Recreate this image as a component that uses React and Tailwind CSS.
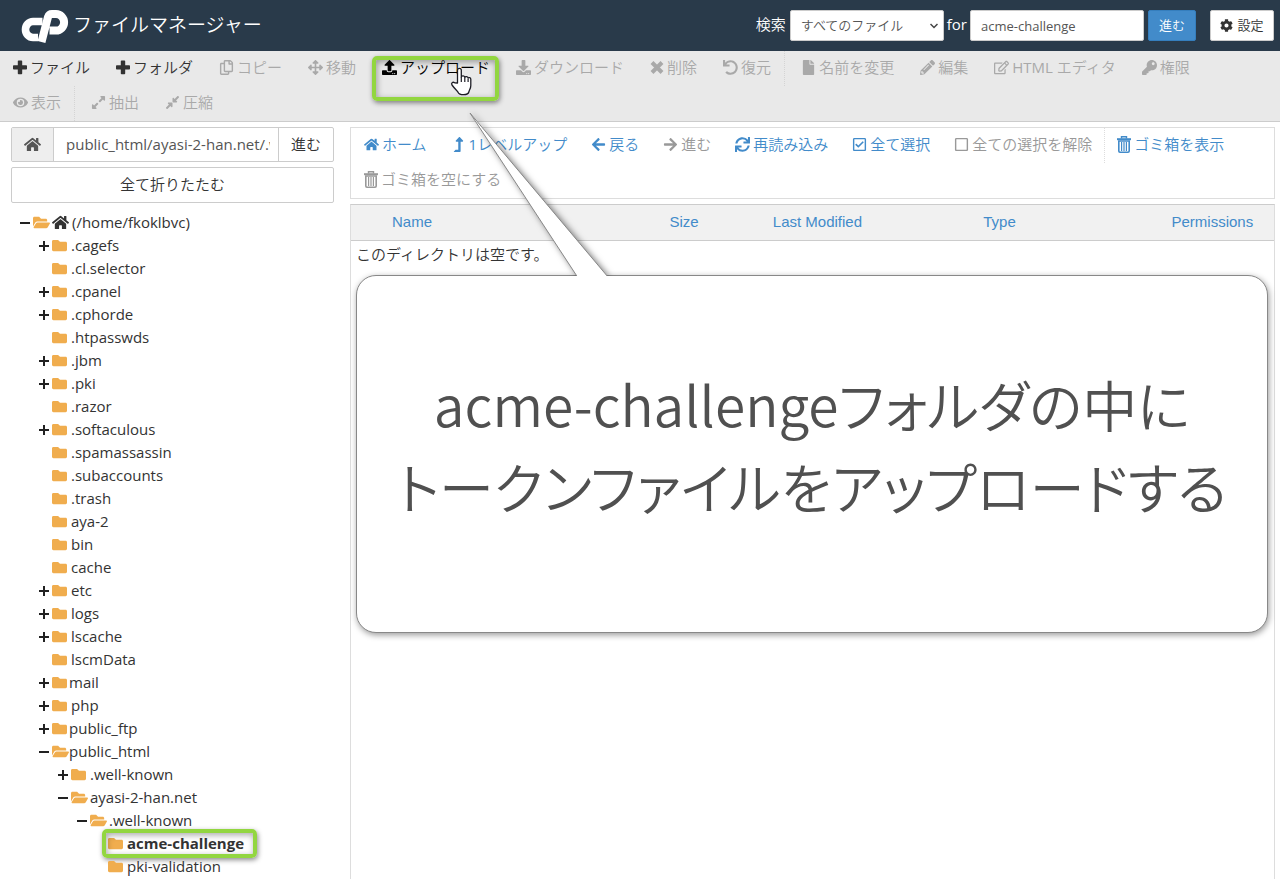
import {
  FaRegCopy, FaArrowsAlt, FaUpload, FaDownload, FaUndo, FaFile, FaPencilAlt,
  FaRegEdit, FaKey, FaEye, FaExpandAlt, FaCompressAlt, FaHome, FaLevelUpAlt, FaArrowLeft,
  FaArrowRight, FaSync, FaRegCheckSquare, FaRegSquare, FaFolder, FaFolderOpen, FaCog,
} from "react-icons/fa";

const ICON = "h-[15px] w-auto shrink-0";

function PlusIcon({ className }) {
  return (
    <svg viewBox="0 0 14 15" fill="currentColor" className={className} aria-hidden="true">
      <path d="M5.600 .5h2.800q.8 0 .8.800v3.900h4q.8 0 .8.800v2.800q0 .8-.8.800h-4v3.900q0 .8-.8.800H5.600q-.8 0-.8-.8V9.600H.8q-.8 0-.8-.8V6q0-.8.8-.8h4V1.300q0-.8.800-.8z" />
    </svg>
  );
}

function CrossIcon({ className }) {
  return (
    <svg viewBox="0 0 14 15" fill="none" stroke="currentColor" strokeWidth="4" className={className} aria-hidden="true">
      <path d="m2 2.500 10 10M12 2.500l-10 10" />
    </svg>
  );
}

function TrashIcon({ className }) {
  return (
    <svg viewBox="0 0 14 17" fill="none" stroke="currentColor" className={className} aria-hidden="true">
      <path d="M4.500 2.500v-1.700h5v1.700" strokeWidth="1.400" />
      <path d="M0 3.200h14" strokeWidth="2" />
      <path d="M1.800 5v10q0 1.200 1.200 1.200h8q1.200 0 1.200-1.200V5z" strokeWidth="1.600" />
      <path d="M4.600 6v9M7 6v9M9.400 6v9" strokeWidth="1.200" />
    </svg>
  );
}

function Logo() {
  return (
    <svg viewBox="21 8 48 34" className="h-[34px] w-[48px]" fill="none" stroke="#fff" role="img" aria-label="cPanel">
      <path d="M42.500 20.500H33a7.500 8 0 0 0 0 16H38" strokeWidth="7.600" />
      <path d="M41.500 41 48 16Q49 13 52 13H56a8 8.200 0 0 1 0 16.600H49.500" strokeWidth="8" />
    </svg>
  );
}

function HandCursor() {
  return (
    <svg viewBox="0 0 22 29" className="absolute left-[81px] top-[16px] z-10 h-[29px] w-[22px]" aria-hidden="true">
      <path
        d="M7.500 16V3.200a1.900 1.900 0 0 1 3.800 0V10c.3-1.800 3.500-1.500 3.500.500.500-1.500 3.300-1.200 3.300.800.500-1.200 2.700-.800 2.700 1v6.200c0 3-1.300 4-1.800 6-.4 2-2.200 3.200-5.500 3.200s-4.700-.8-5.500-2.500C7 23.500 4.500 21.500 2 18c-1.300-2 .8-3.500 2.700-2.200z"
        fill="#fff" stroke="#1c1c24" strokeWidth="1.300" strokeLinejoin="round"
      />
      <path d="M11.300 10v5M14.800 11v4M18.100 12v3" stroke="#1c1c24" strokeWidth="1.200" fill="none" />
    </svg>
  );
}

const TOOLS = [
  { label: "ファイル", icon: PlusIcon, on: true },
  { label: "フォルダ", icon: PlusIcon, on: true },
  { label: "コピー", icon: FaRegCopy },
  { label: "移動", icon: FaArrowsAlt },
  { label: "アップロード", icon: FaUpload, active: true },
  { label: "ダウンロード", icon: FaDownload },
  { label: "削除", icon: CrossIcon },
  { label: "復元", icon: FaUndo, divider: true },
  { label: "名前を変更", icon: FaFile },
  { label: "編集", icon: FaPencilAlt },
  { label: "HTML エディタ", icon: FaRegEdit },
  { label: "権限", icon: FaKey },
  { label: "表示", icon: FaEye, divider: true },
  { label: "抽出", icon: FaExpandAlt },
  { label: "圧縮", icon: FaCompressAlt },
];

const NAV = [
  { label: "ホーム", icon: FaHome },
  { label: "1レベルアップ", icon: FaLevelUpAlt },
  { label: "戻る", icon: FaArrowLeft },
  { label: "進む", icon: FaArrowRight, off: true },
  { label: "再読み込み", icon: FaSync },
  { label: "全て選択", icon: FaRegCheckSquare },
  { label: "全ての選択を解除", icon: FaRegSquare, off: true, divider: true },
  { label: "ゴミ箱を表示", icon: TrashIcon },
  { label: "ゴミ箱を空にする", icon: TrashIcon, off: true },
];

const TREE = [
  [1, "+", ".cagefs"], [1, "", ".cl.selector"], [1, "+", ".cpanel"], [1, "+", ".cphorde"],
  [1, "", ".htpasswds"], [1, "+", ".jbm"], [1, "+", ".pki"], [1, "", ".razor"],
  [1, "+", ".softaculous"], [1, "", ".spamassassin"], [1, "", ".subaccounts"], [1, "", ".trash"],
  [1, "", "aya-2"], [1, "", "bin"], [1, "", "cache"], [1, "+", "etc"], [1, "+", "logs"],
  [1, "+", "lscache"], [1, "", "lscmData"], [1, "+", "mail"], [1, "+", "php"],
  [1, "+", "public_ftp"], [1, "-", "public_html"], [2, "+", ".well-known"],
  [2, "-", "ayasi-2-han.net"], [3, "-", ".well-known"], [4, "", "acme-challenge"],
  [4, "", "pki-validation"],
];
const INDENT = ["pl-[20px]", "pl-[39px]", "pl-[58px]", "pl-[77px]", "pl-[95px]"];
const SPECIAL = ["mail", "public_ftp", "public_html"];
const HIGHLIGHT = "pointer-events-none absolute rounded-[5px] border-4 border-[#92d640] shadow-[1px_2px_5px_rgba(0,0,0,0.45),inset_1px_2px_6px_rgba(0,0,0,0.35)]";

function Toggle({ state }) {
  return (
    <span className="flex w-[13px] shrink-0">
      {state && (
        <svg viewBox="0 0 10 10" className="size-[10px]" stroke="#222" strokeWidth="2" aria-hidden="true">
          <path d={state === "+" ? "M0 5h10M5 0v10" : "M0 5h10"} />
        </svg>
      )}
    </span>
  );
}

function TreeRow({ level, state, name }) {
  const selected = name === "acme-challenge";
  const Folder = state === "-" ? FaFolderOpen : FaFolder;
  return (
    <li className={`relative flex h-[23px] items-center ${INDENT[level]}`}>
      <Toggle state={state} />
      <span className={`flex shrink-0 text-[#f0ad4e] ${SPECIAL.includes(name) ? "w-[17px]" : "w-[19px]"}`}>
        <Folder className={state === "-" ? "size-[17px]" : "size-[15px]"} />
      </span>
      <a href="#tree" className={selected ? "font-bold" : ""}>{name}</a>
      {selected && <span className={`${HIGHLIGHT} -top-[3px] left-[102px] h-[29px] w-[155px]`} />}
    </li>
  );
}

export default function App() {
  return (
    <div className="flex min-h-screen flex-col bg-white font-['Open_Sans','Noto_Sans_CJK_JP_DemiLight','Noto_Sans_CJK_JP',sans-serif] text-[15px] leading-[23px] text-[#333]">
      <header className="flex h-[51px] items-center bg-[#293a4a] pl-[21px] pr-[6px] text-white">
        <Logo />
        <h1 className="ml-1 flex-1 text-[19px]">ファイルマネージャー</h1>
        <form className="flex items-center text-[13px]" onSubmit={(e) => e.preventDefault()}>
          <label htmlFor="scope" className="mr-1 pb-[2px] text-[15px]">検索</label>
          <div className="relative">
            <select id="scope" className="h-[31px] w-[154px] appearance-none rounded-[2px] border border-[#ccc] bg-white px-[10px] text-[#555]">
              <option>すべてのファイル</option>
            </select>
            <svg viewBox="0 0 8 6" className="pointer-events-none absolute right-[6px] top-[13px] h-[6px] w-[8px]" fill="none" stroke="#444" strokeWidth="1.500" aria-hidden="true">
              <path d="m.5 1 3.500 3.500L7.500 1" />
            </svg>
          </div>
          <label htmlFor="query" className="mx-[3px] pb-[2px] text-[15px]">for</label>
          <input id="query" defaultValue="acme-challenge" className="h-[31px] w-[174px] rounded-[2px] border border-[#ccc] bg-white px-[10px] text-[#555]" />
          <button className="ml-1 h-[31px] w-[48px] rounded-[2px] border border-[#357ebd] bg-[#428bca]">進む</button>
          <button type="button" className="ml-[14px] flex h-[31px] w-[64px] items-center justify-center gap-1 rounded-[2px] border border-[#ccc] bg-white text-[#333]">
            <FaCog className="size-[13px]" />設定
          </button>
        </form>
      </header>

      <nav aria-label="ファイル操作" className="flex flex-wrap border-b border-[#ccc] bg-[#e9e9e9] pr-3">
        {TOOLS.map(({ label, icon: Icon, on, active, divider }) => (
          <div key={label} className={`relative flex ${divider ? "mr-[3px] border-r border-dotted border-[#d4d4d4]" : ""}`}>
            <button
              disabled={!on && !active}
              className={`flex h-[35px] items-center gap-[3px] px-[13px] pb-[2px] ${active ? "text-black" : on ? "text-[#333]" : "text-[#a9a9a9]"}`}
            >
              <Icon className={ICON} />{label}
            </button>
            {active && <span className={`${HIGHLIGHT} left-[3px] top-[5px] h-[45px] w-[127px]`} />}
            {active && <HandCursor />}
          </div>
        ))}
      </nav>

      <main className="flex flex-1 gap-[16px] pl-[11px] pr-[5px] pt-[5px]">
        <aside className="w-[323px] shrink-0">
          <form className="flex h-[35px] rounded-[2px] border border-[#ccc]" onSubmit={(e) => e.preventDefault()}>
            <label htmlFor="path" aria-label="パス" className="flex w-[42px] items-center justify-center border-r border-[#ccc] bg-[#eee] text-[#555]">
              <FaHome className="size-[17px]" />
            </label>
            <input id="path" defaultValue="public_html/ayasi-2-han.net/.well-known" className="min-w-0 flex-1 pl-3 pr-2 text-[#555]" />
            <button className="w-[55px] border-l border-[#ccc]">進む</button>
          </form>
          <button className="mt-[5px] h-[36px] w-full rounded-[2px] border border-[#ccc] pb-[2px]">全て折りたたむ</button>
          <ul className="-ml-[11px] mt-2">
            <li className="flex h-[23px] items-center pl-[20px]">
              <Toggle state="-" />
              <FaFolderOpen className="size-[17px] text-[#f0ad4e]" />
              <FaHome className="ml-[2px] size-[17px]" />
              <a href="#tree" className="ml-[3px]">(/home/fkoklbvc)</a>
            </li>
            {TREE.map(([level, state, name], i) => (
              <TreeRow key={i} level={level} state={state} name={name} />
            ))}
          </ul>
        </aside>

        <section className="relative flex min-w-0 flex-1 flex-col">
          <nav aria-label="ナビゲーション" className="flex flex-wrap border border-[#ddd] pl-px">
            {NAV.map(({ label, icon: Icon, off, divider }) => (
              <div key={label} className={divider ? "border-r border-dotted border-[#ddd]" : ""}>
                <button
                  disabled={off}
                  className={`flex h-[35px] items-center gap-[3px] px-3 pb-[2px] ${off ? "text-[#999]" : "text-[#428bca]"}`}
                >
                  <Icon className={Icon === TrashIcon ? "h-[17px] w-auto shrink-0" : ICON} />{label}
                </button>
              </div>
            ))}
          </nav>
          <div className="mt-[5px] flex-1 border border-b-0 border-[#ddd] border-t-[#ccc]">
            <table className="w-full table-fixed text-left font-['Liberation_Sans',Arial,sans-serif] text-[#428bca]">
              <thead className="border-b border-[#ccc] bg-[#f1f1f1]">
                <tr className="h-[35px]">
                  <th className="w-[34.5%] pb-[2px] pl-[41px] font-normal">Name</th>
                  <th className="w-[11.2%] pb-[2px] font-normal">Size</th>
                  <th className="w-[22.8%] pb-[2px] font-normal">Last Modified</th>
                  <th className="w-[20.4%] pb-[2px] font-normal">Type</th>
                  <th className="pb-[2px] font-normal">Permissions</th>
                </tr>
              </thead>
              <tbody className="font-['Open_Sans','Noto_Sans_CJK_JP_DemiLight','Noto_Sans_CJK_JP',sans-serif] text-[#333]">
                <tr><td colSpan={5} className="px-[5px] pt-[2px]">このディレクトリは空です。</td></tr>
              </tbody>
            </table>
          </div>

          <div className="absolute left-[6px] right-[7px] top-[148px] flex h-[358px] items-center justify-center rounded-[20px] border border-[#888] bg-white pb-5 shadow-[1px_2px_6px_rgba(0,0,0,0.4)]">
            <div className="absolute -top-[170px] left-[110px] h-[170px] w-[160px] overflow-hidden">
              <svg viewBox="0 0 160 170" className="h-[170px] w-[160px] drop-shadow-[2px_1px_3px_rgba(0,0,0,0.5)]" aria-hidden="true">
                <path d="M110.500 171 3 7l138 164z" fill="#fff" />
                <path d="M110.500 171 3 7l138 164" fill="none" stroke="#888" />
              </svg>
            </div>
            <p className="whitespace-nowrap text-center font-['Noto_Sans_CJK_JP_DemiLight','Noto_Sans_CJK_JP',sans-serif] text-[55px] font-light leading-[82px] text-[#505050] [font-feature-settings:'palt']">
              acme-challengeフォルダの中に<br />トークンファイルをアップロードする
            </p>
          </div>
        </section>
      </main>
    </div>
  );
}
